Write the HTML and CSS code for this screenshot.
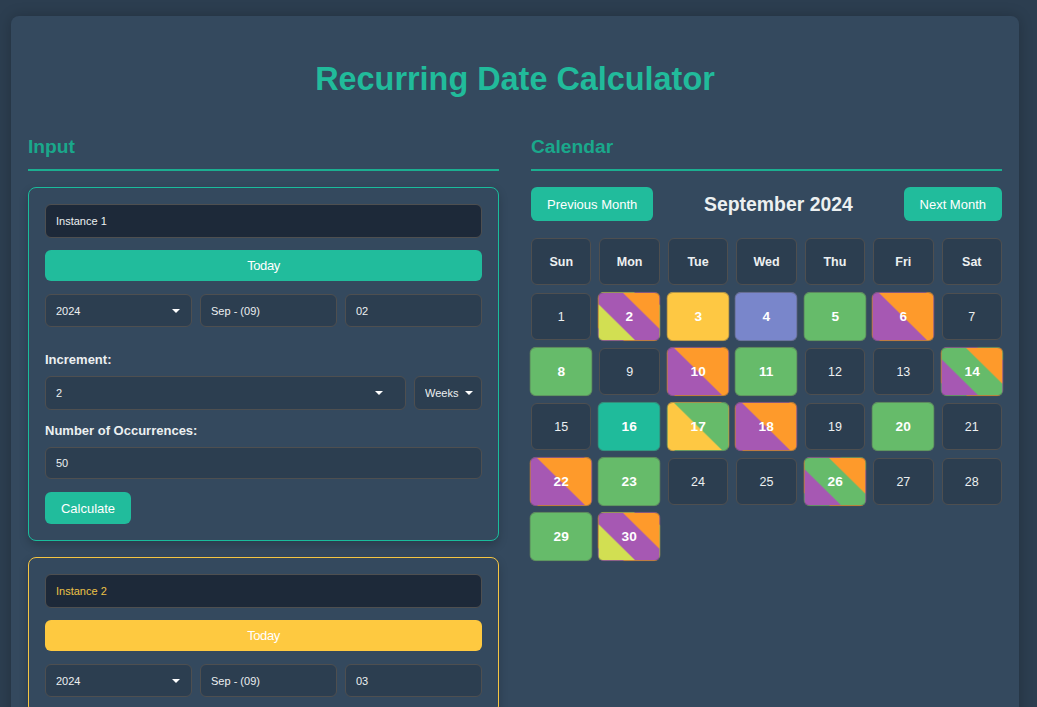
FILE: index.html
```html
<!DOCTYPE html>
<html lang="en">
<head>
<meta charset="utf-8">
<title>Recurring Date Calculator</title>
<link rel="stylesheet" href="styles.css">
</head>
<body>
<div class="container">
  <h1 class="title">Recurring Date Calculator</h1>
  <div class="columns">
    <section class="col">
      <h2 class="section-title">Input</h2>

      <div class="card card-teal">
        <input class="name-input" type="text" value="Instance 1">
        <button class="today-btn today-teal">Today</button>
        <div class="date-row">
          <span class="select-wrap year"><select class="field"><option>2024</option></select></span>
          <input class="field month" type="text" value="Sep - (09)">
          <input class="field day-input" type="text" value="02">
        </div>
        <label class="label label-first">Increment:</label>
        <div class="inc-row">
          <span class="select-wrap inc"><select class="field"><option>2</option></select></span>
          <span class="select-wrap unit"><select class="field"><option>Weeks</option></select></span>
        </div>
        <label class="label">Number of Occurrences:</label>
        <input class="field occ" type="text" value="50">
        <button class="calc-btn">Calculate</button>
      </div>

      <div class="card card-yellow">
        <input class="name-input name-yellow" type="text" value="Instance 2">
        <button class="today-btn today-yellow">Today</button>
        <div class="date-row">
          <span class="select-wrap year"><select class="field"><option>2024</option></select></span>
          <input class="field month" type="text" value="Sep - (09)">
          <input class="field day-input" type="text" value="03">
        </div>
      </div>
    </section>

    <section class="col">
      <h2 class="section-title">Calendar</h2>
      <div class="cal-nav">
        <button class="nav-btn">Previous Month</button>
        <div class="month-title">September 2024</div>
        <button class="nav-btn">Next Month</button>
      </div>
      <div class="cal-grid">
        <div class="head">Sun</div>
        <div class="head">Mon</div>
        <div class="head">Tue</div>
        <div class="head">Wed</div>
        <div class="head">Thu</div>
        <div class="head">Fri</div>
        <div class="head">Sat</div>

        <div class="day">1</div>
        <div class="day hl lpo">2</div>
        <div class="day hl y">3</div>
        <div class="day hl b">4</div>
        <div class="day hl g">5</div>
        <div class="day hl po">6</div>
        <div class="day">7</div>

        <div class="day hl g">8</div>
        <div class="day">9</div>
        <div class="day hl po">10</div>
        <div class="day hl g">11</div>
        <div class="day">12</div>
        <div class="day">13</div>
        <div class="day hl pgo">14</div>

        <div class="day">15</div>
        <div class="day hl t">16</div>
        <div class="day hl yg">17</div>
        <div class="day hl po">18</div>
        <div class="day">19</div>
        <div class="day hl g">20</div>
        <div class="day">21</div>

        <div class="day hl po">22</div>
        <div class="day hl g">23</div>
        <div class="day">24</div>
        <div class="day">25</div>
        <div class="day hl pgo">26</div>
        <div class="day">27</div>
        <div class="day">28</div>

        <div class="day hl g">29</div>
        <div class="day hl lpo">30</div>
      </div>
    </section>
  </div>
</div>
</body>
</html>
```

FILE: styles.css
```css
html, body {
  margin: 0;
  padding: 0;
}

body {
  background: #2c3e50;
  font-family: "Liberation Sans", Arial, Helvetica, sans-serif;
  color: #ecf0f1;
  padding-top: 16px;
  overflow: hidden;
}

.container {
  margin-left: 11px;
  width: 1008px;
  box-sizing: border-box;
  background: #34495e;
  border-radius: 8px;
  padding: 45px 17px 40px 17px;
  box-shadow: 0 0 14px rgba(0, 0, 0, 0.22);
  min-height: 760px;
}

.title {
  margin: 0;
  text-align: center;
  font-size: 32.4px;
  font-weight: bold;
  color: #21bb9b;
  line-height: 37px;
}

.columns {
  display: grid;
  grid-template-columns: 1fr 1fr;
  column-gap: 32px;
  margin-top: 38px;
}

.section-title {
  margin: 0;
  font-size: 19.2px;
  line-height: 22px;
  font-weight: bold;
  color: #1aa88b;
  padding-bottom: 11px;
  border-bottom: 2px solid #1cae90;
}

/* ---------- input cards ---------- */
.card {
  margin-top: 16px;
  border: 1px solid #1abc9c;
  border-radius: 8px;
  padding: 16px;
  display: flex;
  flex-direction: column;
  box-shadow: 0 4px 10px rgba(0, 0, 0, 0.2);
}

.card-yellow {
  border-color: #f5c542;
}

.field,
.name-input {
  box-sizing: border-box;
  font-family: "Liberation Sans", Arial, sans-serif;
  font-size: 11px;
  color: #ecf0f1;
  background: #2c3e50;
  border: 1px solid #4e4f50;
  border-radius: 6px;
  padding: 0 10px;
  outline: none;
  margin: 0;
}

.name-input {
  height: 34px;
  width: 100%;
  background: #1d2939;
}

.name-yellow {
  color: #ecc247;
}

.today-btn {
  margin-top: 12px;
  height: 31px;
  border: none;
  border-radius: 6px;
  color: #ffffff;
  font-family: "Liberation Sans", Arial, sans-serif;
  font-size: 13px;
  letter-spacing: -0.4px;
}

.today-teal {
  background: #21bc9c;
}

.today-yellow {
  background: #fec940;
}

.date-row {
  margin-top: 13px;
  display: flex;
  gap: 8px;
  height: 33px;
}

.date-row .field {
  height: 33px;
}

.date-row .year {
  flex: 0 0 147px;
}

.date-row .month {
  flex: 0 0 137px;
  width: 137px;
}

.date-row .day-input {
  flex: 1 1 auto;
  min-width: 0;
  width: 100%;
}

.select-wrap {
  position: relative;
  display: block;
}

.select-wrap select {
  -webkit-appearance: none;
  appearance: none;
  width: 100%;
  height: 100%;
}

.select-wrap::after {
  content: "";
  position: absolute;
  top: 50%;
  margin-top: -2px;
  right: 12px;
  width: 0;
  height: 0;
  border-left: 4px solid transparent;
  border-right: 4px solid transparent;
  border-top: 4px solid #ffffff;
  pointer-events: none;
}

.select-wrap.inc::after {
  right: 23px;
}

.select-wrap.unit::after {
  right: 9px;
}

.label {
  display: block;
  font-size: 13px;
  font-weight: bold;
  line-height: 15px;
  margin-top: 13px;
  margin-bottom: 9px;
  color: #ecf0f1;
}

.label-first {
  margin-top: 25px;
}

.inc-row {
  display: flex;
  gap: 8px;
  height: 34px;
}

.inc-row .inc {
  flex: 1 1 auto;
}

.inc-row .unit {
  flex: 0 0 68px;
}

.inc-row .field {
  height: 34px;
}

.occ {
  height: 32px;
  width: 100%;
}

.calc-btn {
  margin-top: 13px;
  align-self: flex-start;
  height: 32px;
  width: 86px;
  border: none;
  border-radius: 6px;
  background: #21bc9c;
  color: #ffffff;
  font-family: "Liberation Sans", Arial, sans-serif;
  font-size: 13px;
  padding: 0;
}

/* ---------- calendar ---------- */
.cal-nav {
  margin-top: 16px;
  display: flex;
  justify-content: space-between;
  align-items: center;
  height: 34px;
}

.nav-btn {
  height: 34px;
  border: none;
  border-radius: 6px;
  background: #21bc9c;
  color: #ffffff;
  font-family: "Liberation Sans", Arial, sans-serif;
  font-size: 13px;
  padding: 0 16px;
}

.month-title {
  font-size: 19.4px;
  font-weight: bold;
  color: #ecf0f1;
}

.cal-grid {
  margin-top: 17px;
  display: grid;
  grid-template-columns: repeat(7, 1fr);
  grid-auto-rows: 47px;
  gap: 8px;
}

.head,
.day {
  box-sizing: border-box;
  display: flex;
  align-items: center;
  justify-content: center;
  background: #2c3e50;
  border: 1px solid #4e4f50;
  border-radius: 6px;
  font-size: 12.5px;
  color: #ecf0f1;
}

.head {
  font-weight: bold;
}

.day.hl {
  transform: scale(1.05);
  font-weight: bold;
  color: #ffffff;
  font-size: 13px;
  border-color: rgba(80, 80, 80, 0.45);
}

.g { background: #66bb6a; }
.y { background: #fec843; }
.b { background: #7986cb; }
.t { background: #1fbb9b; }

.po {
  background: linear-gradient(45deg, #a658b3 50%, #fe9a2b 50%);
}

.yg {
  background: linear-gradient(45deg, #fec843 50%, #66bb6a 50%);
}

.lpo {
  background: linear-gradient(45deg, #d2df52 33.33%, #a658b3 33.33%, #a658b3 66.67%, #fe9a2b 66.67%);
}

.pgo {
  background: linear-gradient(45deg, #a658b3 33.33%, #66bb6a 33.33%, #66bb6a 66.67%, #fe9a2b 66.67%);
}
```
